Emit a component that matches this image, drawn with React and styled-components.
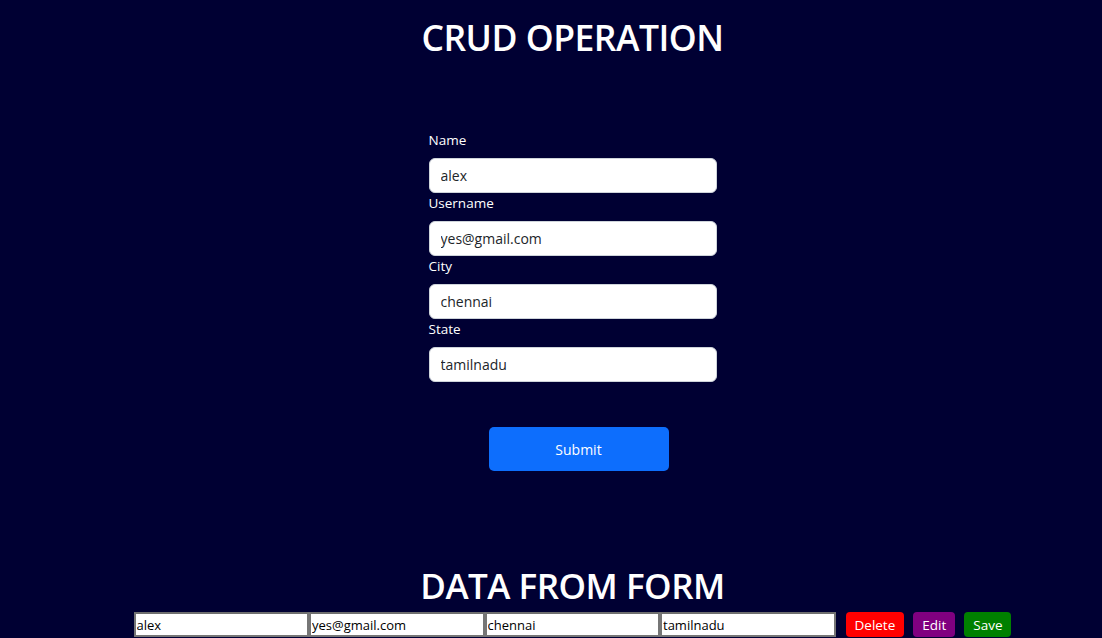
import React, { useState } from 'react';
import styled, { createGlobalStyle } from 'styled-components';

const GlobalStyle = createGlobalStyle`
    html, body {
        margin: 0;
        padding: 0;
        background-color: #000033;
        overflow: hidden;
    }
    * {
        box-sizing: border-box;
    }
`;

const Page = styled.div`
    width: 1145px;
    min-height: 638px;
    background-color: #000033;
    color: #ffffff;
    font-family: "Open Sans", "Noto Sans", sans-serif;
    display: flex;
    flex-direction: column;
    align-items: center;
`;

const Heading = styled.h1`
    margin: 0;
    font-size: ${props => props.size}px;
    font-weight: 600;
    line-height: 1.2;
    letter-spacing: -0.5px;
    margin-top: ${props => props.top}px;
`;

const Form = styled.form`
    width: 288px;
    margin-top: 71px;
    display: flex;
    flex-direction: column;
`;

const Label = styled.label`
    font-size: 13.5px;
    line-height: 20px;
    margin-bottom: 8px;
`;

const Field = styled.input`
    width: 100%;
    height: 35px;
    border: 1px solid #ced4da;
    border-radius: 6px;
    padding: 0 11px;
    font-family: inherit;
    font-size: 14px;
    color: #212529;
    background: #fff;
    outline: none;
    & + label {
        margin-top: 0.3px;
    }
`;

const SubmitButton = styled.button`
    align-self: center;
    margin-top: 45px;
    width: 180px;
    height: 44px;
    border: none;
    border-radius: 5px;
    background-color: #0d6efd;
    color: #fff;
    font-family: inherit;
    font-size: 14px;
    transform: translateX(6px);
`;

const DataRow = styled.div`
    display: flex;
    align-items: center;
    margin-top: 5px;
`;

const Cell = styled.input`
    width: 175.5px;
    height: 25px;
    border: 2px solid #767676;
    border-top-color: #6f6f6f;
    padding: 1px 1px;
    font-family: "Open Sans", "Noto Sans", sans-serif;
    font-size: 13px;
    color: #000;
    background: #fff;
    outline: none;
`;

const Action = styled.button`
    height: 25px;
    margin-left: ${props => props.gap}px;
    padding: 0 9px;
    border: none;
    border-radius: 4px;
    background-color: ${props => props.color};
    color: #fff;
    font-family: "Open Sans", "Noto Sans", sans-serif;
    font-size: 13.5px;
`;

const fields = [
    { key: 'name', label: 'Name' },
    { key: 'username', label: 'Username' },
    { key: 'city', label: 'City' },
    { key: 'state', label: 'State' },
];

const App = () => {
    const [form, setForm] = useState({
        name: 'alex',
        username: 'yes@gmail.com',
        city: 'chennai',
        state: 'tamilnadu',
    });

    const onChange = (key) => (e) => setForm({ ...form, [key]: e.target.value });

    return (
        <>
            <GlobalStyle />
            <Page>
                <Heading top={16} size={35.5}>CRUD OPERATION</Heading>
                <Form onSubmit={(e) => e.preventDefault()}>
                    {fields.map((f) => (
                        <React.Fragment key={f.key}>
                            <Label>{f.label}</Label>
                            <Field value={form[f.key]} onChange={onChange(f.key)} />
                        </React.Fragment>
                    ))}
                    <SubmitButton type="submit">Submit</SubmitButton>
                </Form>
                <Heading top={94} size={35}>DATA FROM FORM</Heading>
                <DataRow>
                    <Cell defaultValue="alex" />
                    <Cell defaultValue="yes@gmail.com" />
                    <Cell defaultValue="chennai" />
                    <Cell defaultValue="tamilnadu" />
                    <Action gap={10} color="#ff0000">Delete</Action>
                    <Action gap={9} color="#800080">Edit</Action>
                    <Action gap={9} color="#008000">Save</Action>
                </DataRow>
            </Page>
        </>
    );
};

export default App;
